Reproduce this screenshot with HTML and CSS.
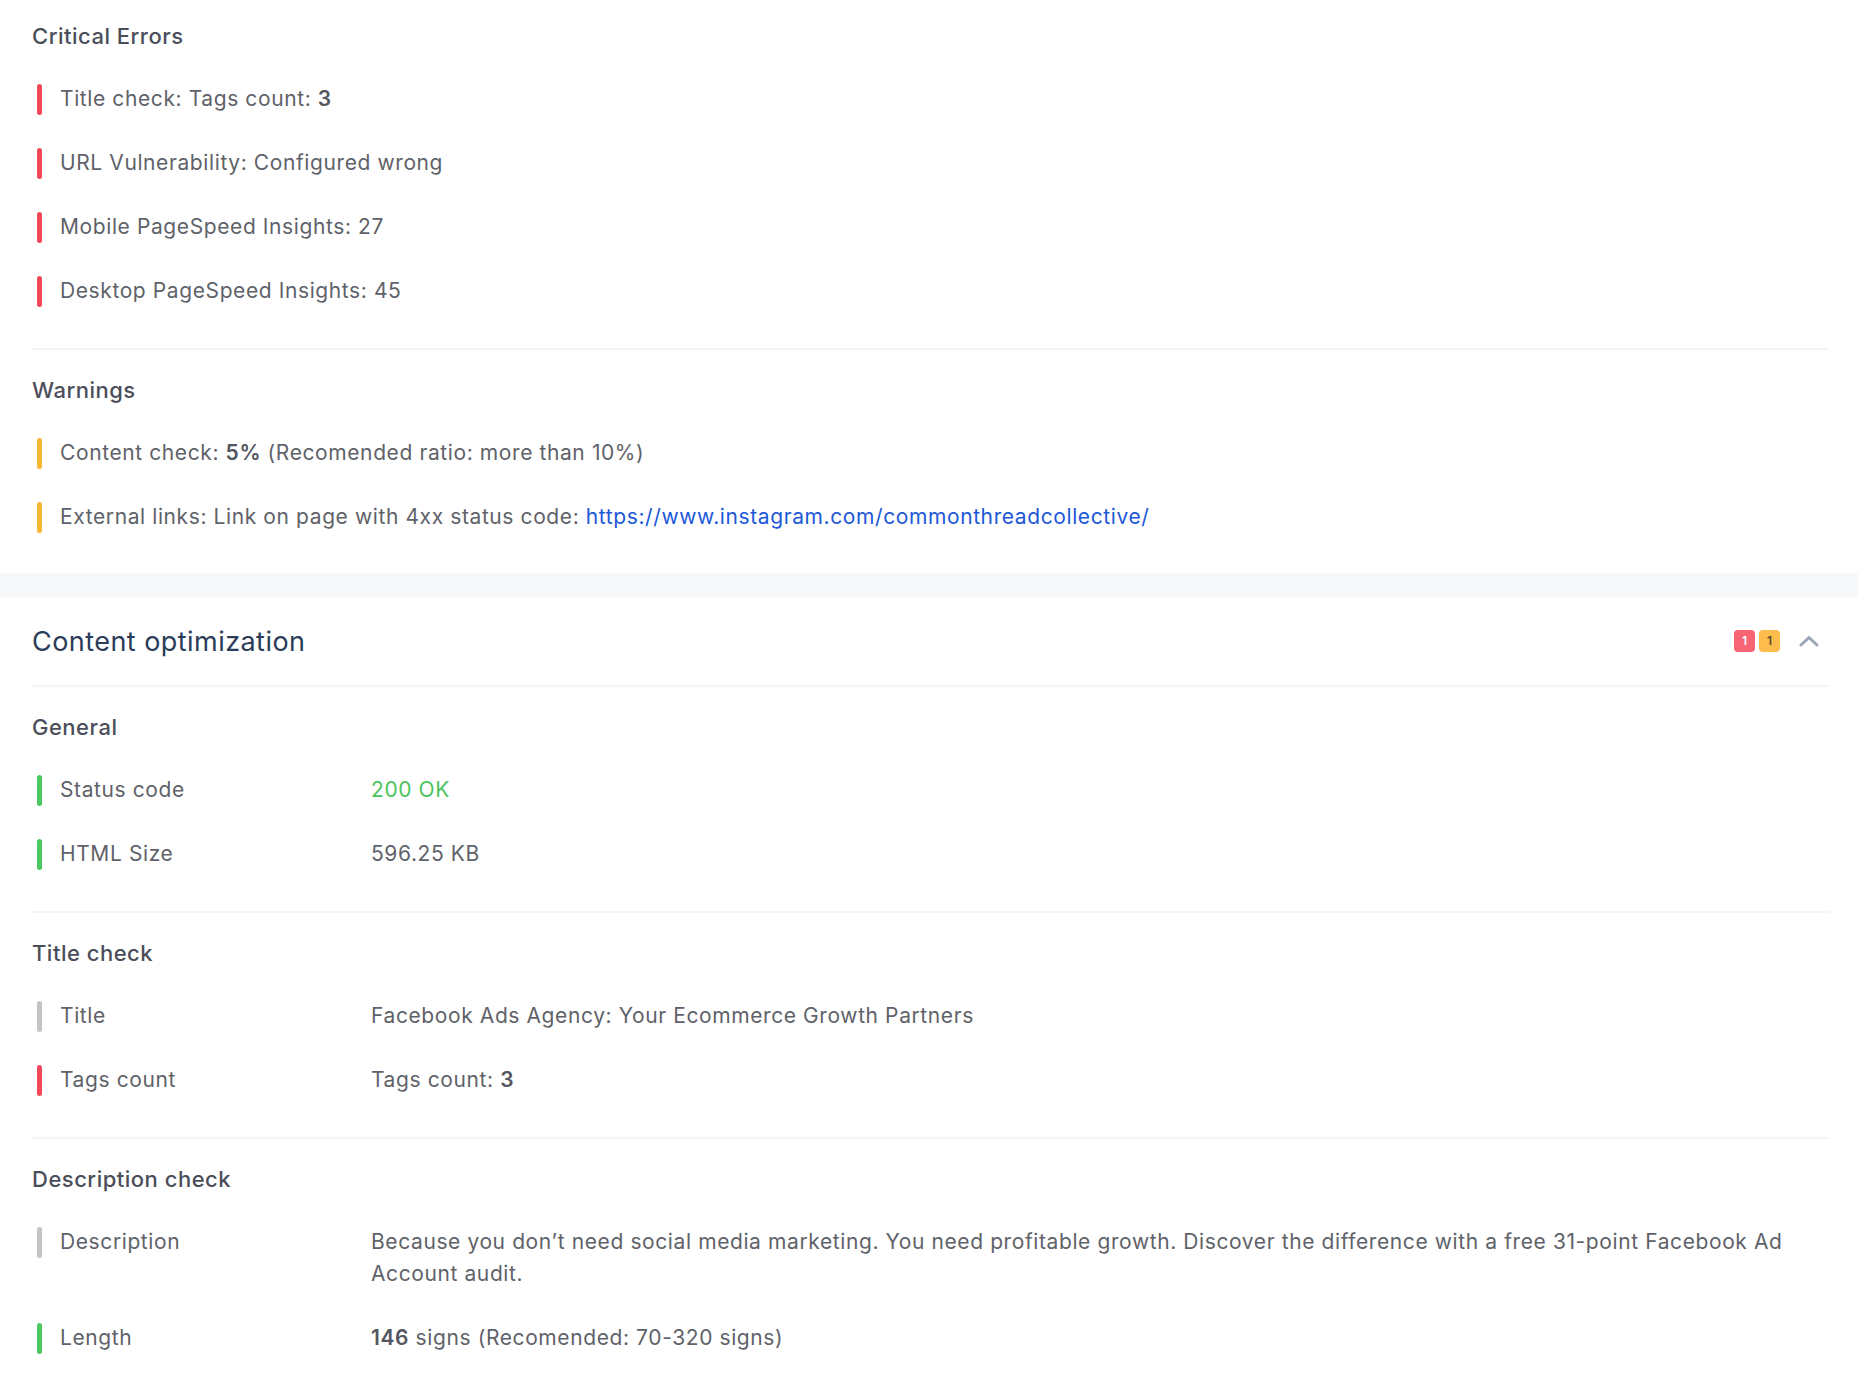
FILE: index.html
```html
<!DOCTYPE html>
<html lang="en">
<head>
<meta charset="UTF-8">
<meta name="viewport" content="width=device-width, initial-scale=1.0">
<title>Audit report</title>
<link rel="stylesheet" href="styles.css">
</head>
<body>

<div class="panel">
    <div class="group">
        <h3>Critical Errors</h3>
        <div class="row"><span class="mark red"></span><span class="text">Title check: Tags count: <b>3</b></span></div>
        <div class="row"><span class="mark red"></span><span class="text">URL Vulnerability: Configured wrong</span></div>
        <div class="row"><span class="mark red"></span><span class="text">Mobile PageSpeed Insights: 27</span></div>
        <div class="row"><span class="mark red"></span><span class="text">Desktop PageSpeed Insights: 45</span></div>
    </div>
    <div class="group last">
        <h3>Warnings</h3>
        <div class="row"><span class="mark yellow"></span><span class="text">Content check: <b>5%</b> (Recomended ratio: more than 10%)</span></div>
        <div class="row"><span class="mark yellow"></span><span class="text">External links: Link on page with 4xx status code: <a href="#">https://www.instagram.com/commonthreadcollective/</a></span></div>
    </div>
</div>

<div class="band"></div>

<div class="panel">
    <div class="section-head">
        <h2>Content optimization</h2>
        <div class="tools">
            <span class="badge red">1</span>
            <span class="badge yellow">1</span>
            <svg class="chevron" width="20" height="12" viewBox="0 0 20 12"><polyline points="2,10 10,2.5 18,10" fill="none" stroke="#9ba6b5" stroke-width="3" stroke-linecap="round" stroke-linejoin="round"/></svg>
        </div>
    </div>

    <div class="group">
        <h3>General</h3>
        <div class="row"><span class="mark green"></span><span class="label">Status code</span><span class="value ok">200 OK</span></div>
        <div class="row"><span class="mark green"></span><span class="label">HTML Size</span><span class="value">596.25 KB</span></div>
    </div>

    <div class="group">
        <h3>Title check</h3>
        <div class="row"><span class="mark grey"></span><span class="label">Title</span><span class="value">Facebook Ads Agency: Your Ecommerce Growth Partners</span></div>
        <div class="row"><span class="mark red"></span><span class="label">Tags count</span><span class="value">Tags count: <b>3</b></span></div>
    </div>

    <div class="group last">
        <h3>Description check</h3>
        <div class="row"><span class="mark grey"></span><span class="label">Description</span><span class="value">Because you don’t need social media marketing. You need profitable growth. Discover the difference with a free 31-point Facebook Ad Account audit.</span></div>
        <div class="row"><span class="mark green"></span><span class="label">Length</span><span class="value"><b>146</b> signs (Recomended: 70-320 signs)</span></div>
    </div>
</div>

</body>
</html>
```

FILE: styles.css
```css
body {
    margin: 0;
    background-color: #ffffff;
    font-family: Inter, "Open Sans", sans-serif;
    color: #5f6269;
}
.panel {
    padding: 0 29px 0 32px;
}
.group {
    padding: 24px 0 25px;
    border-bottom: 2px solid #f4f5f7;
}
.group.last {
    border-bottom: none;
    padding-bottom: 24px;
}
.group:first-child {
    padding-top: 20px;
}
h3 {
    margin: 0 0 15px;
    font-size: 22px;
    line-height: 32px;
    font-weight: 500;
    letter-spacing: 0.5px;
    color: #4b4e5a;
}
.row {
    display: flex;
    align-items: flex-start;
    padding: 16px 0;
    font-size: 21px;
    line-height: 32px;
    letter-spacing: 0.6px;
}
.mark {
    flex: none;
    width: 5px;
    height: 31px;
    margin: 1px 18px 0 5px;
    border-radius: 3px;
}
.mark.red { background-color: #f2495a; }
.mark.yellow { background-color: #f8b730; }
.mark.green { background-color: #4cc860; }
.mark.grey { background-color: #c4c4c6; }
.row b {
    font-weight: 600;
    color: #53565e;
}
.row a {
    color: #1d58d8;
    text-decoration: none;
}
.label {
    flex: none;
    width: 311px;
}
.value {
    flex: 1;
}
.value.ok {
    color: #4cc45e;
}
.band {
    height: 24px;
    background-color: #f7f8fa;
}
.section-head {
    display: flex;
    align-items: center;
    justify-content: space-between;
    height: 88px;
    border-bottom: 2px solid #f4f5f7;
}
h2 {
    margin: 0;
    font-size: 27px;
    font-weight: 400;
    letter-spacing: 0.45px;
    color: #2b3c58;
}
.tools {
    display: flex;
    align-items: center;
    gap: 4px;
    margin-right: 10px;
}
.badge {
    width: 21px;
    height: 22px;
    border-radius: 4px;
    font-size: 12px;
    font-weight: 600;
    line-height: 22px;
    text-align: center;
}
.badge.red {
    background-color: #f76574;
    color: #ffffff;
}
.badge.yellow {
    background-color: #fcbd4c;
    color: #5a4a2a;
}
.chevron {
    margin-left: 15px;
}
```
